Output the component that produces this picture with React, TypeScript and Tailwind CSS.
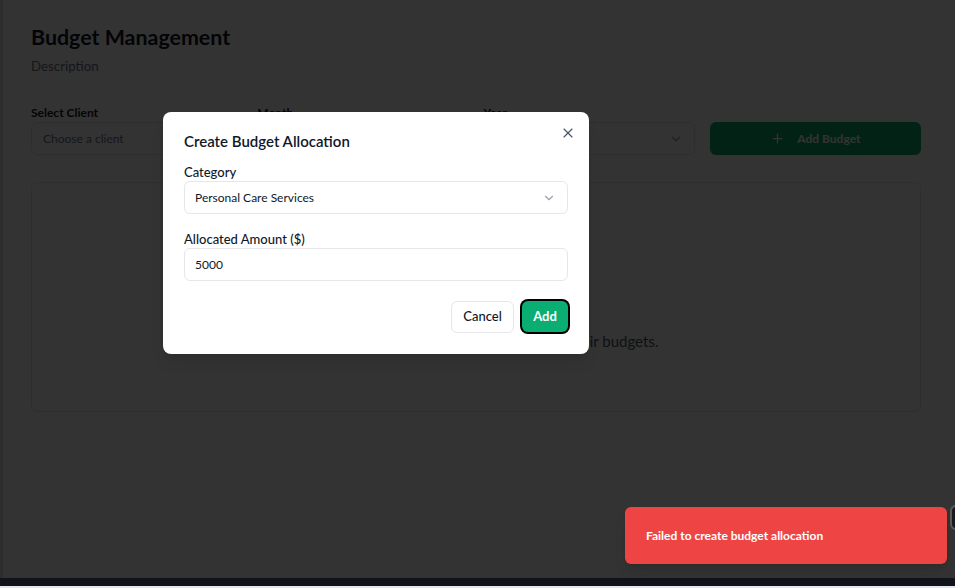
import React from 'react';
import { ChevronDown, Plus, X } from 'lucide-react';

const font = { fontFamily: 'Lato, "Noto Sans", Arial, sans-serif' };

const filters = [
  { label: 'Select Client', placeholder: 'Choose a client' },
  { label: 'Month', placeholder: '' },
  { label: 'Year', placeholder: '' },
];

const App: React.FC = () => {
  return (
    <div className="relative h-[588px] w-full overflow-hidden bg-white text-gray-900" style={font}>
      <div className="flex h-full flex-col">
        <main className="flex-1 pl-[31px] pr-[34px] pt-[23px]">
          <h1 className="text-[21.4px] font-bold leading-7">Budget Management</h1>
          <p className="mt-[5px] text-[13.3px] leading-5 text-gray-500">Description</p>

          <div className="mt-[29px] grid grid-cols-4 gap-x-[15px]">
            {filters.map((f) => (
              <div key={f.label} className="flex flex-col">
                <label className="mb-px text-[12px] font-bold leading-4">{f.label}</label>
                <div className="flex h-[33px] items-center justify-between rounded-md border border-gray-200 px-[11px] text-[12px] text-gray-500">
                  <span>{f.placeholder}</span>
                  <ChevronDown size={14} className="text-gray-400" />
                </div>
              </div>
            ))}
            <div className="flex flex-col justify-end">
              <button className="flex h-[33px] items-center justify-center gap-[12px] rounded-md bg-[#0aa86c] text-[12px] font-bold text-white">
                <Plus size={15} />
                Add Budget
              </button>
            </div>
          </div>

          <div className="mt-[27px] flex h-[230px] flex-col items-center justify-end rounded-md border border-gray-200 pb-[59px]">
            <p className="text-[15px] text-gray-600">Please select a client to view and manage their budgets.</p>
          </div>
        </main>
        <div className="h-2 bg-[#11131a]" />
        <div className="h-[2px] bg-[#e5e7eb]" />
      </div>

      {/* overlay */}
      <div className="absolute inset-x-0 top-0 bottom-[10px] bg-black/80" />
      <div className="absolute left-0 top-0 bottom-[10px] w-[3px] bg-[#2d2d2d]" />

      {/* dialog */}
      <div className="absolute left-[163px] top-[112px] w-[426px] rounded-lg bg-white px-[21px] pb-[21px] pt-[17px] shadow-lg">
        <div className="flex items-start justify-between">
          <h2 className="text-[15px] font-semibold leading-6">Create Budget Allocation</h2>
          <X size={16} strokeWidth={1.75} className="-mr-[8px] mt-[-4px] text-gray-600" />
        </div>

        <label className="mt-[11px] block text-[13px] font-medium leading-4">Category</label>
        <div className="mt-px flex h-[33px] items-center justify-between rounded-md border border-gray-200 pl-[10px] pr-[11px] text-[12px]">
          <span>Personal Care Services</span>
          <ChevronDown size={14} className="text-gray-400" />
        </div>

        <label className="mt-[17px] block text-[13px] font-medium leading-4">Allocated Amount ($)</label>
        <div className="mt-px flex h-[33px] items-center rounded-md border border-gray-200 pl-[10px] text-[12px]">
          5000
        </div>

        <div className="mt-[20px] flex justify-end gap-2">
          <button className="h-[32px] w-[63px] rounded-md border border-gray-200 bg-white text-[13px] font-medium">
            Cancel
          </button>
          <button className="h-[31px] w-[46px] rounded-md bg-[#0aad72] text-[13px] font-bold text-white ring-2 ring-black">
            Add
          </button>
        </div>
      </div>

      {/* toast */}
      <div className="absolute left-[625px] top-[507px] flex h-[57px] w-[322px] items-center rounded-md bg-[#ef4444] pl-[21px] shadow-lg">
        <span className="text-[12px] font-bold text-white">Failed to create budget allocation</span>
      </div>
      <div className="absolute left-[950px] top-[505px] h-[25px] w-[10px] rounded-l-md border-l-2 border-t-2 border-b-2 border-[#5a5a5a] bg-[#1a1a1a]" />
    </div>
  );
};

export default App;
